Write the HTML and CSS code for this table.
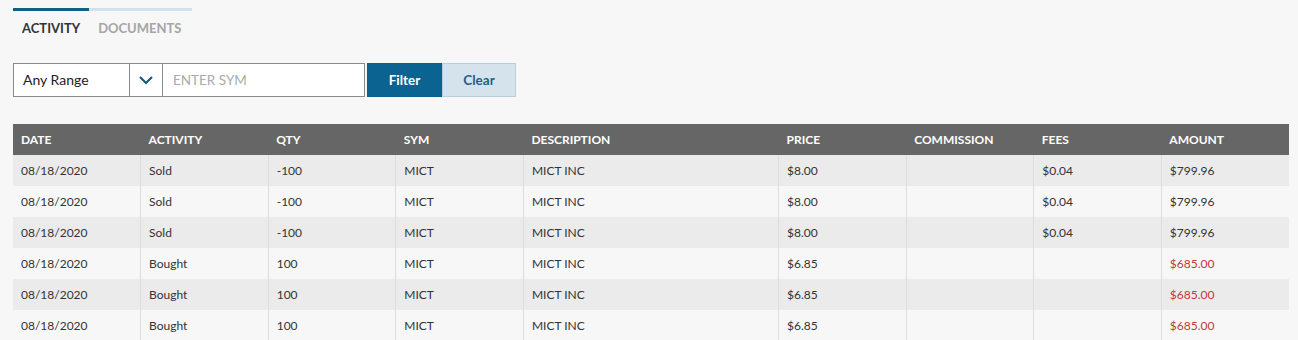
FILE: index.html
```html
<!DOCTYPE html>
<html>
<head>
<meta charset="utf-8">
<link rel="stylesheet" href="styles.css">
</head>
<body>
<div class="page">
  <div class="tabs">
    <div class="tab active">ACTIVITY</div>
    <div class="tab">DOCUMENTS</div>
  </div>
  <div class="filters">
    <div class="select">
      <span class="select-label">Any Range</span>
      <span class="select-arrow">
        <svg width="16" height="10" viewBox="0 0 16 10"><path d="M2 2 L8 8 L14 2" fill="none" stroke="#17587e" stroke-width="2.2"/></svg>
      </span>
    </div>
    <div class="sym-input">ENTER SYM</div>
    <button class="btn btn-filter">Filter</button>
    <button class="btn btn-clear">Clear</button>
  </div>
  <table class="grid">
    <colgroup>
      <col class="c1"><col class="c1"><col class="c1"><col class="c1"><col class="c2"><col class="c1"><col class="c1"><col class="c1"><col class="c1">
    </colgroup>
    <thead>
      <tr><th>DATE</th><th>ACTIVITY</th><th>QTY</th><th>SYM</th><th>DESCRIPTION</th><th>PRICE</th><th>COMMISSION</th><th>FEES</th><th>AMOUNT</th></tr>
    </thead>
    <tbody>
      <tr><td>08/18/2020</td><td>Sold</td><td>-100</td><td>MICT</td><td>MICT INC</td><td>$8.00</td><td></td><td>$0.04</td><td>$799.96</td></tr>
      <tr><td>08/18/2020</td><td>Sold</td><td>-100</td><td>MICT</td><td>MICT INC</td><td>$8.00</td><td></td><td>$0.04</td><td>$799.96</td></tr>
      <tr><td>08/18/2020</td><td>Sold</td><td>-100</td><td>MICT</td><td>MICT INC</td><td>$8.00</td><td></td><td>$0.04</td><td>$799.96</td></tr>
      <tr><td>08/18/2020</td><td>Bought</td><td>100</td><td>MICT</td><td>MICT INC</td><td>$6.85</td><td></td><td></td><td class="neg">$685.00</td></tr>
      <tr><td>08/18/2020</td><td>Bought</td><td>100</td><td>MICT</td><td>MICT INC</td><td>$6.85</td><td></td><td></td><td class="neg">$685.00</td></tr>
      <tr><td>08/18/2020</td><td>Bought</td><td>100</td><td>MICT</td><td>MICT INC</td><td>$6.85</td><td></td><td></td><td class="neg">$685.00</td></tr>
    </tbody>
  </table>
</div>
</body>
</html>
```
FILE: styles.css
```css
html, body {
  margin: 0;
  padding: 0;
  background: #f7f7f7;
  font-family: Lato, "Open Sans", sans-serif;
  color: #333;
}
*, *::before, *::after {
  box-sizing: border-box;
}
.page {
  padding: 8px 9px 0 13px;
}
.tabs {
  display: flex;
  width: 179px;
  border-top: 3px solid #d3e2ea;
}
.tab {
  font-size: 13px;
  font-weight: 700;
  color: #a5a5a5;
  padding: 9px 9px 0 9px;
  margin-top: -3px;
  border-top: 3px solid transparent;
  height: 32px;
}
.tab.active {
  color: #333;
  border-top-color: #11607f;
}
.filters {
  display: flex;
  margin-top: 23px;
  height: 34px;
}
.select {
  display: flex;
  width: 150px;
  border: 1px solid #8a8a8a;
  background: #fff;
}
.select-label {
  flex: 1;
  font-size: 14px;
  padding-left: 9px;
  line-height: 32px;
  color: #222;
}
.select-arrow {
  width: 33px;
  border-left: 1px solid #8a8a8a;
  display: flex;
  align-items: center;
  justify-content: center;
}
.sym-input {
  width: 203px;
  border: 1px solid #8a8a8a;
  margin-left: -1px;
  background: #fff;
  font-size: 13.5px;
  line-height: 32px;
  padding-left: 10px;
  color: #aaa;
}
.btn {
  font-family: Lato, "Open Sans", sans-serif;
  font-size: 13.5px;
  font-weight: 700;
  height: 34px;
  border: 1px solid;
  padding: 0;
  cursor: pointer;
}
.btn-filter {
  margin-left: 2px;
  width: 75px;
  background: #0a6391;
  border-color: #0a5f8a;
  color: #fff;
}
.btn-clear {
  width: 74px;
  background: #d5e3ec;
  border-color: #b9cfdc;
  color: #1f5f86;
}
.grid {
  margin-top: 27px;
  width: 1276px;
  border-collapse: collapse;
  table-layout: fixed;
  font-size: 12px;
}
.c1 { width: 10%; }
.c2 { width: 20%; }
.grid th {
  background: #666;
  color: #fff;
  font-weight: 700;
  text-align: left;
  height: 31px;
  padding: 0 8px;
}
.grid td {
  height: 31px;
  padding: 0 8px;
  border-left: 1px solid #ddd;
  color: #333;
}
.grid td:first-child {
  border-left: none;
}
.grid tbody tr:nth-child(odd) {
  background: #ebebeb;
}
.grid tbody tr:nth-child(even) {
  background: #f7f7f7;
}
.grid td.neg {
  color: #c0393b;
}
```
